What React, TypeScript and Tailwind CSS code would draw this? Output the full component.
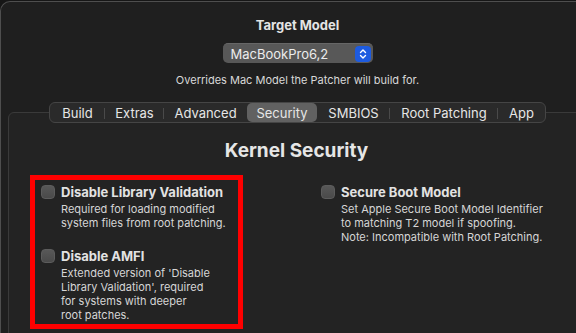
import React from "react";

const tabs: { label: string; w: string; sel?: boolean; sep?: boolean }[] = [
  { label: "Build", w: "w-[55px]", sep: true },
  { label: "Extras", w: "w-[59px]", sep: true },
  { label: "Advanced", w: "w-[83px]" },
  { label: "Security", w: "w-[70px]", sel: true },
  { label: "SMBIOS", w: "w-[73px]", sep: true },
  { label: "Root Patching", w: "w-[108px]", sep: true },
  { label: "App", w: "w-[47px]" },
];

function Checkbox() {
  return (
    <div className="w-[14px] h-[14px] shrink-0 rounded-[4px] bg-gradient-to-b from-[#585858] to-[#4a4a4a] border border-[#5c5c5c]" />
  );
}

function Option({ title, lines, gapTop }: { title: string; lines: string[]; gapTop?: string }) {
  return (
    <div className={`flex flex-col ${gapTop ?? ""}`}>
      <div className="flex items-center gap-[6px] h-[16px]">
        <Checkbox />
        <span className="text-[13px] font-bold leading-[16px] text-[#e2e2e2]">{title}</span>
      </div>
      <div className="mt-[2px] pl-[20px] flex flex-col">
        {lines.map((l) => (
          <span key={l} className="text-[11px] leading-[14px] text-[#d6d6d6] whitespace-nowrap">
            {l}
          </span>
        ))}
      </div>
    </div>
  );
}

export default function App() {
  return (
    <div
      className="w-[576px] h-[333px] overflow-hidden bg-[#161616] pt-[1px]"
      style={{ fontFamily: "Inter, 'Noto Sans', sans-serif" }}
    >
      <div className="w-[594px] h-[340px] rounded-tl-[10px] border-t border-l border-[#4e4e4e] bg-[#1f1f1f] flex flex-col items-center">
        <div className="mt-[15px] text-[13px] font-bold leading-[16px] text-[#e4e4e4]">Target Model</div>
        <div className="mt-[10px] w-[150px] h-[20px] rounded-[5px] bg-[#585858] border-t border-[#666] flex items-center justify-between pl-[8px] pr-[2px]">
          <span className="text-[13px] leading-[16px] text-[#ececec]">MacBookPro6,2</span>
          <div className="w-[16px] h-[16px] rounded-[4px] bg-[#1d5be0] flex items-center justify-center">
            <svg width="8" height="12" viewBox="0 0 8 12" fill="none" stroke="#ffffff" strokeWidth="1.4" strokeLinecap="round" strokeLinejoin="round">
              <path d="M1.5 4.5 L4 2 L6.5 4.5" />
              <path d="M1.5 7.5 L4 10 L6.5 7.5" />
            </svg>
          </div>
        </div>
        <div className="mt-[10px] text-[11px] leading-[14px] text-[#d8d8d8]">
          Overrides Mac Model the Patcher will build for.
        </div>

        <div className="mt-[15px] relative z-10 flex items-center h-[21px] rounded-[6px] bg-[#2a2a2a] border border-[#454545]">
          {tabs.map((t) => (
            <div
              key={t.label}
              className={`${t.w} h-full flex items-center justify-center relative ${
                t.sel ? "bg-[#616161] rounded-[5px]" : ""
              }`}
            >
              <span className="text-[13px] leading-[16px] text-[#e6e6e6] whitespace-nowrap">{t.label}</span>
              {t.sep && <div className="absolute right-0 top-[5px] w-[1px] h-[11px] bg-[#4a4a4a]" />}
            </div>
          ))}
        </div>

        <div className="-mt-[11px] self-stretch ml-[7px] mr-[-20px] flex-1 rounded-[6px] border border-[#3a3a3a] bg-[#232323] flex flex-col">
          <div className="mt-[26px] text-center text-[19px] font-bold leading-[24px] text-[#e6e6e6] pr-[29px]">
            Kernel Security
          </div>
          <div className="mt-[12px] flex pl-[21px]">
            <div className="w-[213px] border-[5px] border-[#ff0000] pl-[6px] pt-[4px] pb-[2px]">
              <Option
                title="Disable Library Validation"
                lines={["Required for loading modified", "system files from root patching."]}
              />
              <Option
                gapTop="mt-[18px]"
                title="Disable AMFI"
                lines={["Extended version of 'Disable", "Library Validation', required", "for systems with deeper", "root patches."]}
              />
            </div>
            <div className="ml-[78px] pt-[9px]">
              <Option
                title="Secure Boot Model"
                lines={[
                  "Set Apple Secure Boot Model Identifier",
                  "to matching T2 model if spoofing.",
                  "Note: Incompatible with Root Patching.",
                ]}
              />
            </div>
          </div>
        </div>
      </div>
    </div>
  );
}
